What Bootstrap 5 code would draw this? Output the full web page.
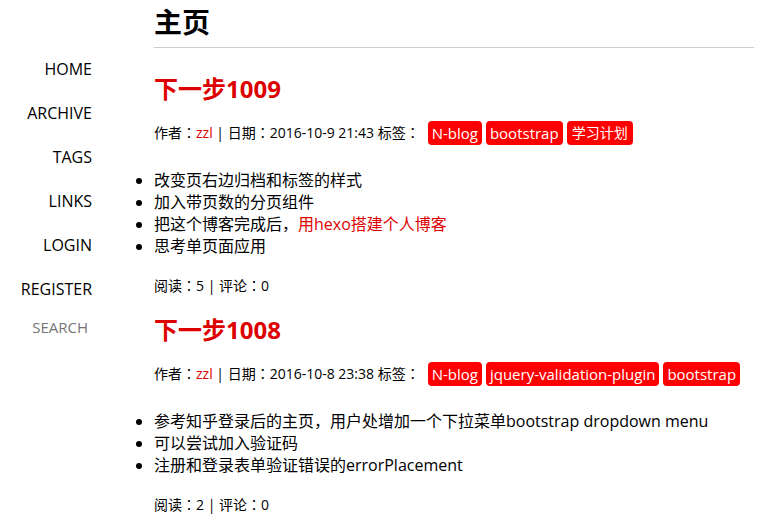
<!DOCTYPE html>
<html lang="zh-CN">
<head>
<meta charset="utf-8">
<meta name="viewport" content="width=device-width, initial-scale=1">
<title>主页</title>
<link rel="stylesheet" href="https://cdn.jsdelivr.net/npm/bootstrap@5.3.0/dist/css/bootstrap.min.css">
<style>
body { font-family: "Open Sans", "Noto Sans CJK SC", sans-serif; font-size: 14px; line-height: 20px; color: #000; }
a { color: #d00; text-decoration: none; }
.side { width: 92px; padding-top: 47px; }
.side a { color: #000; font-size: 16px; line-height: 20px; padding: 12px 0; }
.search-box { color: #000; width: 72px; height: 24px; margin-top: 4px; font-size: 15px; background: transparent; }
.search-box::placeholder { color: #757575; opacity: 1; }
.posts { padding-left: 62px; padding-right: 3px; }
.page-title { font-size: 28px; line-height: 44px; height: 48px; margin-bottom: 26px; border-bottom: 1px solid #ccc; }
.post-title { font-size: 24px; line-height: 30px; margin-bottom: 17px; }
.post-meta { line-height: 24px; margin-bottom: 24px; }
.post-tag { background: #f00; color: #fff; font-size: 15px; line-height: 24px; padding: 0 4px; border-radius: 4px; }
.post-tag:lang(zh) { font-size: 14px; padding: 0 5px; }
.post-body { font-size: 16px; line-height: 22px; margin-bottom: 19px; padding: 0; }
.post-item { margin-bottom: 19px; }
/* Full-width colon centred in its cell */
.mid { font-family: "Noto Sans CJK TC", sans-serif; line-height: 1; }
</style>
<script defer src="https://cdn.jsdelivr.net/npm/bootstrap@5.3.0/dist/js/bootstrap.bundle.min.js"></script>
</head>
<body class="bg-white">
<div class="d-flex">
  <aside class="side flex-shrink-0">
    <nav class="nav flex-column text-end">
      <a href="#home">HOME</a>
      <a href="#archive">ARCHIVE</a>
      <a href="#tags">TAGS</a>
      <a href="#links">LINKS</a>
      <a href="#login">LOGIN</a>
      <a href="#register">REGISTER</a>
    </nav>
    <form class="d-flex justify-content-end" role="search">
      <input class="search-box border-0 p-0 pe-1 text-end" type="text" placeholder="SEARCH" aria-label="SEARCH">
    </form>
  </aside>
  <main class="posts flex-grow-1">
    <h1 class="page-title fw-bold">主页</h1>
    <article class="post-item">
      <h2 class="post-title fw-bold"><a href="#p1009">下一步1009</a></h2>
      <div class="post-meta d-flex flex-wrap align-items-center gap-1">
        <span class="me-1">作者<span class="mid" lang="zh-TW">：</span><a href="#zzl">zzl</a> | 日期<span class="mid" lang="zh-TW">：</span>2016-10-9 21:43 标签<span class="mid" lang="zh-TW">：</span></span>
        <a class="post-tag" lang="en" href="#n-blog">N-blog</a>
        <a class="post-tag" lang="en" href="#bootstrap">bootstrap</a>
        <a class="post-tag" href="#plan">学习计划</a>
      </div>
      <ul class="post-body">
        <li>改变页右边归档和标签的样式</li>
        <li>加入带页数的分页组件</li>
        <li>把这个博客完成后，<a href="#hexo">用hexo搭建个人博客</a></li>
        <li>思考单页面应用</li>
      </ul>
      <div>阅读<span class="mid" lang="zh-TW">：</span>5 | 评论<span class="mid" lang="zh-TW">：</span>0</div>
    </article>
    <article class="post-item">
      <h2 class="post-title fw-bold"><a href="#p1008">下一步1008</a></h2>
      <div class="post-meta d-flex flex-wrap align-items-center gap-1">
        <span class="me-1">作者<span class="mid" lang="zh-TW">：</span><a href="#zzl">zzl</a> | 日期<span class="mid" lang="zh-TW">：</span>2016-10-8 23:38 标签<span class="mid" lang="zh-TW">：</span></span>
        <a class="post-tag" lang="en" href="#n-blog">N-blog</a>
        <a class="post-tag" lang="en" href="#jquery">jquery-validation-plugin</a>
        <a class="post-tag" lang="en" href="#bootstrap">bootstrap</a>
      </div>
      <ul class="post-body">
        <li>参考知乎登录后的主页，用户处增加一个下拉菜单bootstrap dropdown menu</li>
        <li>可以尝试加入验证码</li>
        <li>注册和登录表单验证错误的errorPlacement</li>
      </ul>
      <div>阅读<span class="mid" lang="zh-TW">：</span>2 | 评论<span class="mid" lang="zh-TW">：</span>0</div>
    </article>
  </main>
</div>
</body>
</html>
